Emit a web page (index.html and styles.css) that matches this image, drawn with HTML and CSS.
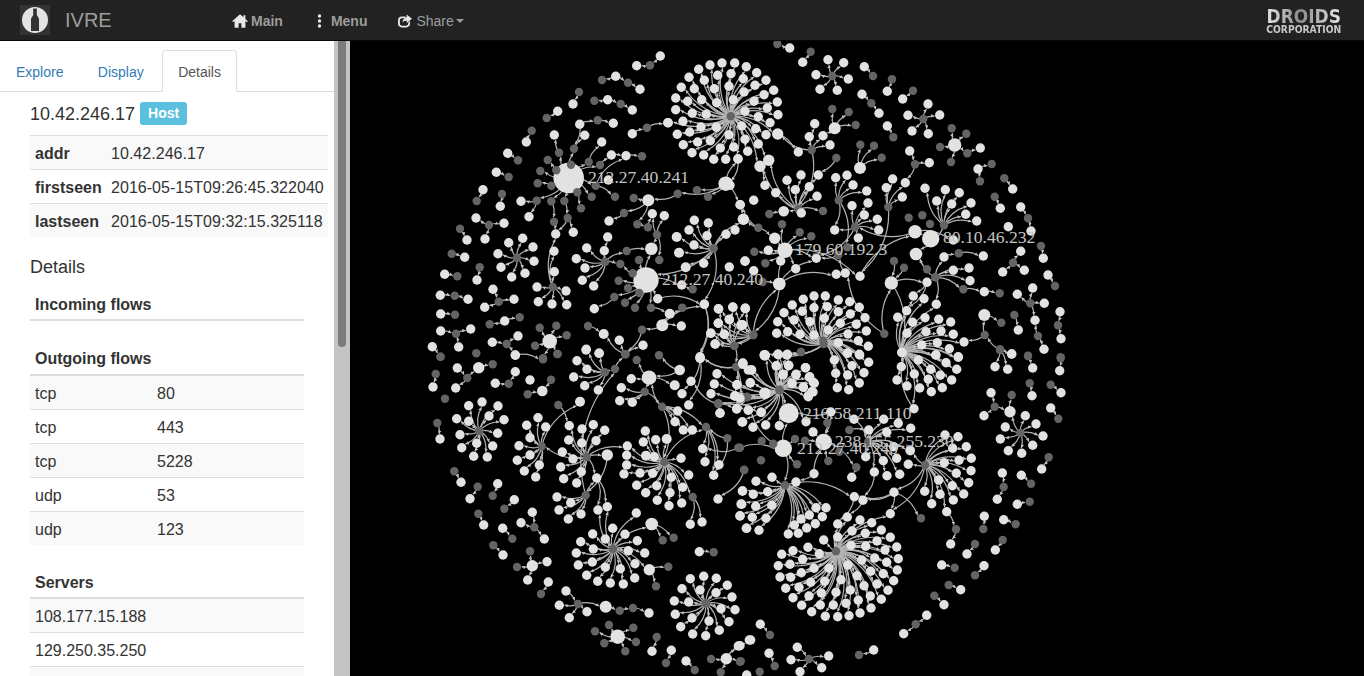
FILE: index.html
```html
<!DOCTYPE html>
<html lang="en">
<head>
<meta charset="utf-8">
<title>IVRE</title>
<link rel="stylesheet" href="styles.css">
</head>
<body>
<nav class="navbar">
  <a class="brand-logo">
    <svg class="brand-icon" viewBox="0 0 30 30">
      <circle cx="15" cy="15" r="13" fill="#e4e4e4"/>
      <path d="M13.200 3.500h3.600v6c0 2 2.200 2.400 2.200 5v11.500h-8V14.500c0-2.600 2.200-3 2.200-5z" fill="#333"/>
    </svg>
  </a>
  <a class="brand-name">IVRE</a>
  <ul class="nav">
    <li class="nav-main">
      <svg class="ico ico-home" viewBox="0 0 16 14"><path d="M8 0.3 0.2 7.2l.9 1L2.6 7v6.8h4V9.3h2.8v4.5h4V7l1.5 1.2.9-1-2.400-2.200V1.200h-2v2L8 .3z" fill="#e8e8e8"/></svg>
      <b>Main</b>
    </li>
    <li class="nav-menu">
      <svg class="ico ico-dots" viewBox="0 0 5 14"><circle cx="2.500" cy="2" r="1.700" fill="#e8e8e8"/><circle cx="2.500" cy="7" r="1.700" fill="#e8e8e8"/><circle cx="2.500" cy="12" r="1.700" fill="#e8e8e8"/></svg>
      <b>Menu</b>
    </li>
    <li class="nav-share">
      <svg class="ico ico-share" viewBox="0 0 15 14"><path d="M4 2.200h4v1.800H4.200C3 4 2 5 2 6.200v3.600C2 11 3 12 4.200 12h4.600C10 12 11 11 11 9.800V8.600l1.900-1.500v2.900c0 2.200-1.800 3.900-3.900 3.900H4C1.800 13.900 0 12.200 0 10V6.100C0 3.900 1.800 2.200 4 2.200z" fill="#e8e8e8"/><path d="M9.300 0 15 4.600 9.300 9.200V6.400C7.400 6.400 5.800 7.200 4.800 9 4.900 5.800 6.800 3.500 9.300 3.100z" fill="#e8e8e8"/></svg>
      <span>Share</span><i class="caret"></i>
    </li>
  </ul>
  <div class="droids"><span class="droids-top">DROIDS</span><span class="droids-sub">CORPORATION</span></div>
</nav>
<div class="main">
  <aside class="sidebar">
    <ul class="tabs">
      <li class="tab">Explore</li>
      <li class="tab">Display</li>
      <li class="tab tab-active">Details</li>
    </ul>
    <div class="panel">
      <h4 class="host-title">10.42.246.17 <span class="label">Host</span></h4>
      <table class="tbl tbl-wide">
        <tr><th class="kcol">addr</th><td>10.42.246.17</td></tr>
        <tr><th class="kcol">firstseen</th><td>2016-05-15T09:26:45.322040</td></tr>
        <tr><th class="kcol">lastseen</th><td>2016-05-15T09:32:15.325118</td></tr>
      </table>
      <h4 class="section">Details</h4>
      <table class="tbl tbl-flow">
        <thead><tr><th colspan="2">Incoming flows</th></tr></thead>
      </table>
      <table class="tbl tbl-flow">
        <thead><tr><th colspan="2">Outgoing flows</th></tr></thead>
        <tbody>
          <tr><td class="proto">tcp</td><td>80</td></tr>
          <tr><td class="proto">tcp</td><td>443</td></tr>
          <tr><td class="proto">tcp</td><td>5228</td></tr>
          <tr><td class="proto">udp</td><td>53</td></tr>
          <tr><td class="proto">udp</td><td>123</td></tr>
        </tbody>
      </table>
      <table class="tbl tbl-flow">
        <thead><tr><th>Servers</th></tr></thead>
        <tbody>
          <tr><td>108.177.15.188</td></tr>
          <tr><td>129.250.35.250</td></tr>
          <tr><td>&nbsp;</td></tr>
        </tbody>
      </table>
    </div>
  </aside>
  <div class="scrollbar"><div class="thumb"></div></div>
  <div class="canvas"><svg id="graph" class="graph" viewBox="350 41 1014 635" preserveAspectRatio="xMinYMin slice"></svg></div>
</div>
<script src="graph.js"></script>
</body>
</html>
```

FILE: styles.css
```css
* { box-sizing: border-box; }
html, body { margin: 0; height: 100%; overflow: hidden; }
body { font-family: "Liberation Sans", Arial, sans-serif; font-size: 14px; color: #333; background: #fff; }

.navbar { height: 41px; background: #222; border-bottom: 1px solid #080808; display: flex; align-items: center; padding-left: 20px; padding-right: 23px; }
.brand-logo { width: 30px; height: 30px; background: #333; flex: none; }
.brand-icon { width: 30px; height: 30px; display: block; }
.brand-name { margin-left: 15px; font-size: 20px; color: #9d9d9d; width: 167px; }
.nav { list-style: none; display: flex; margin: 0; padding: 1px 0 0; color: #9d9d9d; flex: 1; }
.nav li { display: flex; align-items: center; }
.nav b { font-weight: bold; }
.ico { display: block; }
.ico-home { width: 16px; height: 14px; margin-right: 3px; }
.ico-dots { width: 5px; height: 14px; margin-right: 9px; }
.ico-share { width: 14px; height: 14px; margin-right: 4px; }
.nav-menu { margin-left: 34px; }
.nav-share { margin-left: 31px; }
.caret { width: 0; height: 0; margin-left: 2px; border-top: 4px solid #9d9d9d; border-left: 4px solid transparent; border-right: 4px solid transparent; }
.droids { display: flex; flex-direction: column; align-items: center; width: 75px; height: 26px; margin-top: 2px; font-family: "DejaVu Sans", sans-serif; font-weight: bold; line-height: 1; white-space: nowrap; }
.droids-top { display: block; font-size: 20px; height: 17px; line-height: 17px; transform: scaleX(0.85); background: linear-gradient(90deg, #e6e6e6, #8a8a8a 45%, #e6e6e6); -webkit-background-clip: text; background-clip: text; color: transparent; }
.droids-sub { display: block; font-size: 10px; height: 9px; line-height: 9px; transform: scaleX(0.92); color: #c8c8c8; }

.main { display: flex; height: 635px; }
.sidebar { width: 334px; flex: none; overflow: hidden; padding-top: 9px; }
.scrollbar { width: 16px; flex: none; background: #c2c3c3; padding: 0 4px; }
.thumb { width: 8px; height: 306px; background: #7b7d7d; border-radius: 0 0 4px 4px; }
.canvas { flex: 1; background: #000; overflow: hidden; }
.graph { display: block; width: 1014px; height: 635px; }
.link { fill: none; stroke: #b2b2b2; stroke-width: 1.2; }
.arrow-head { fill: #c0c0c0; }
.node-white { fill: #e2e2e2; }
.node-grey { fill: #646464; }
.glabel { font-family: "Liberation Serif", serif; font-size: 17.6px; fill: #c4c4c4; }

.tabs { list-style: none; margin: 0; padding: 0; display: flex; border-bottom: 1px solid #ddd; height: 42px; }
.tab { margin-right: 2.4px; height: 42px; padding: 11px 15px 9px; border: 1px solid transparent; border-radius: 4px 4px 0 0; color: #337ab7; line-height: 20px; }
.tab-active { color: #555; background: #fff; border-color: #ddd; border-bottom-color: #fff; }

.panel { padding-left: 30px; }
h4 { font-weight: 500; font-size: 18px; line-height: 20px; margin: 0; }
.host-title { margin-top: 10px; margin-bottom: 10px; display: flex; align-items: center; height: 23px; white-space: pre; }
.label { display: inline-block; background: #5bc0de; color: #fff; font-size: 14px; font-weight: bold; line-height: 23px; height: 23px; padding: 0 8px; border-radius: 3px; }
.section { margin-top: 19px; margin-bottom: 10px; }

.tbl { border-collapse: collapse; font-size: 16px; line-height: 22.857px; margin-bottom: 20px; }
.tbl-wide { width: 298px; table-layout: fixed; }
.tbl-wide td { letter-spacing: 0.04px; }
.tbl-flow { width: 274px; }
.tbl th, .tbl td { padding: 7px 5px 3px; text-align: left; white-space: nowrap; }
.tbl td { border-top: 1px solid #ddd; }
.tbl th { font-weight: bold; }
.tbl-wide th { border-top: 1px solid #ddd; }
.tbl thead th { border-bottom: 2px solid #ddd; }
.tbl thead + tbody tr:first-child td { border-top: 0; }
.tbl-wide tr:nth-child(odd), .tbl tbody tr:nth-child(odd) { background: #f9f9f9; }
.kcol { width: 76px; }
.proto { width: 122px; }
```

FILE: graph.js
```js
var NS = "http://www.w3.org/2000/svg";
var svg = document.getElementById("graph");

var defs = document.createElementNS(NS, "defs");
var marker = document.createElementNS(NS, "marker");
marker.setAttribute("id", "arrow");
marker.setAttribute("viewBox", "0 0 6 6");
marker.setAttribute("refX", "6");
marker.setAttribute("refY", "3");
marker.setAttribute("markerUnits", "userSpaceOnUse");
marker.setAttribute("markerWidth", "3.5");
marker.setAttribute("markerHeight", "3.5");
marker.setAttribute("orient", "auto");
var head = document.createElementNS(NS, "path");
head.setAttribute("d", "M0 0L6 3L0 6z");
head.setAttribute("class", "arrow-head");
marker.appendChild(head);
defs.appendChild(marker);
svg.appendChild(defs);

var edgesLayer = document.createElementNS(NS, "g");
var nodesLayer = document.createElementNS(NS, "g");
var labelLayer = document.createElementNS(NS, "g");
svg.appendChild(edgesLayer);
svg.appendChild(nodesLayer);
svg.appendChild(labelLayer);

var seen = {};
function parse(tok, ox, oy) {
  var m = tok.split(",");
  var grey = m[0].charAt(0) === "g";
  var x = ox + parseFloat(m[0].slice(1)) / 3;
  var y = oy + parseFloat(m[1]) / 3;
  var r = m[2] ? parseFloat(m[2]) / 3 : (grey ? 4.2 : 4.7);
  var key = ox + ":" + oy + ":" + tok;
  if (!seen[key]) {
    seen[key] = 1;
    var c = document.createElementNS(NS, "circle");
    c.setAttribute("cx", x.toFixed(1));
    c.setAttribute("cy", y.toFixed(1));
    c.setAttribute("r", r.toFixed(1));
    c.setAttribute("class", grey ? "node-grey" : "node-white");
    nodesLayer.appendChild(c);
  }
  return { x: x, y: y, r: r };
}
function edge(a, b) {
  var dx = b.x - a.x, dy = b.y - a.y, d = Math.sqrt(dx * dx + dy * dy);
  if (d < 1) return;
  var k = (d - b.r - 0.5) / d;
  if (k < 0.1) return;
  var ex = a.x + dx * k, ey = a.y + dy * k;
  var p = document.createElementNS(NS, "path");
  var rad = (d * 1.0).toFixed(1);
  p.setAttribute("d", "M" + a.x.toFixed(1) + " " + a.y.toFixed(1) + "A" + rad + " " + rad + " 0 0 1 " + ex.toFixed(1) + " " + ey.toFixed(1));
  p.setAttribute("class", "link");
  p.setAttribute("marker-end", "url(#arrow)");
  edgesLayer.appendChild(p);
}
function add(ox, oy, data) {
  data.split(";").forEach(function (g) {
    g = g.trim();
    if (!g) return;
    if (g.indexOf(">") >= 0) {
      var chain = g.split(">").map(function (t) { return parse(t.trim(), ox, oy); });
      for (var i = 0; i + 1 < chain.length; i++) edge(chain[i], chain[i + 1]);
    } else {
      var toks = g.split(/\s+/).map(function (t) { return parse(t, ox, oy); });
      for (var j = 1; j < toks.length; j++) edge(toks[0], toks[j]);
    }
  });
}

add(420, 40, "w721,48>g690,76>w650,77;w587,109 g546,120 g624,128;g624,128>w660,148;g477,156>w459,192;w563,179 g523,182 g602,192;g602,192>w637,210;w413,214>g380,234;w479,253 g533,241 g462,326;g533,241>w580,250;w319,306>g335,272;w263,340>g294,361;w229,397>g266,411;" +
"w446,414,46 g383,360 g361,393 g409,391 g453,374 g353,430 g394,437 g350,482 g394,484 g433,483 g472,457 g515,470 g527,437 g483,505 g417,338 g462,326 g506,366 g540,375;g417,338>w403,285;g462,326>w494,286;g506,366>w545,306;g540,375>w574,345;g527,437>w618,347;w618,347>g666,349;w574,345>w618,347;g527,437>g585,470;w565,420;" +
"g350,482 w303,484 w327,530;g394,484>g402,545>w407,582;g433,483>g443,534>w460,577;g443,534>w407,582;" +
"g398,741 w351,741 w438,753 w355,785 w396,792 w440,794 w403,695 w402,634 w407,582;" +
"w189,449>g170,483;g246,462>w241,499;g207,555 w168,534 w252,550 w195,597;g120,566>w141,600;g95,641>w134,652;w74,703>g112,709;g179,682>w171,720;" +
"g291,653 w266,608 w308,595 w339,621 w342,664 w315,700 w275,711 w243,682 w234,641;" +
"w219,748>g236,785;g236,785 w282,778 w194,802;w61,766>g104,767>w144,778;w62,822>g105,824;w62,873>g108,881;g108,881 w152,867 w116,921;w37,920>g61,950;g169,940;w254,843 g209,853 g299,832;w217,907>g260,912;g260,912 w294,888 w286,945;w389,904,22 g359,863 g409,857 g440,886 g345,917 g412,942 g369,955;" +
"w637,281>g681,263>w743,248;w917,431,22>w954,356;" +
"w917,431,22 g773,461 g831,451 g864,470 w961,494;g773,461>w685,481,18;w685,481,18 g641,474 g612,519 g652,553;g612,519>w567,543;g652,553>g684,562;g684,562 w697,521;g711,584 w733,527 w697,521 w694,626,19 g718,660;" +
"g881,625 w823,541 w865,549 w807,570 w861,587 w770,591,15 w822,615 w777,638,15 w851,670 w797,682,15 w678,720,38 w853,793 w918,583 w945,570 w970,538,17;" +
"g556,665 w563,591 w500,624 w553,632 w469,656 w495,684 w487,721 w521,738 g620,633 g601,672;g620,633>w694,626,19;" +
"w678,720,38 g638,700 g596,722 g624,744 g583,771 g615,788 g658,759 g645,803 g693,803 w713,776 w785,735 g657,660 g601,672 w694,626,19;g583,771>w523,806;g693,803>w749,821,15;w713,776>w853,793;" +
"w727,856,18 w784,858 w749,821,15 g666,869 g787,803 w853,793;g666,869>g617,943;g617,943 w551,882,15 w669,916 w598,901;g504,858>w551,882,15;w499,928;w537,940;" +
"g943,917 w895,806 w938,801 w976,805 w928,838 w965,855,15 w895,850 w913,883 w872,880 w885,912;w853,793>w840,950;g818,748 w785,735;w975,663;w928,681;w961,494>w970,538,17;");

add(665, 52, "g197,193 w171,33 w209,33 w244,44 w275,62 w303,85 w326,115 w337,150 w339,188 w338,246,17 w135,39 w101,52 w72,76 w49,106 w32,138 w32,173 w10,212 w37,247 w55,278 w81,302 w116,309 w146,322 w182,322 w219,321 w248,298 w280,276 w311,325,17 w285,343,17 w315,212 w303,248 w158,70 w198,65 w235,80 w270,100 w297,128 w307,168 w118,85 w88,110 w68,148 w54,208 w74,240 w98,270 w136,266 w166,288 w206,285 w240,262 w272,230 w280,194 w267,148 w237,120 w192,103 w148,110 w110,143 w82,184 w108,225 w154,226 w192,248 w230,222 w240,178 w205,143 w155,152 w124,187;w219,321>w195,400;w285,343,17>w300,400;w338,246,17>w400,300;");

add(690, 270, "g190,195 w86,117 w129,112 w166,116 w118,149 w155,165,15 w85,160 w63,190 w103,193 w76,222 g133,227 w268,42,19;g133,227>g139,290;w43,103,14>w31,265,14;g139,290 w31,265,14 w184,300;w224,256,16;w264,253;w290,255;w259,287;w296,287;w279,315;w318,315;w347,293;w358,322;w373,340;w340,352;w306,340;w369,366;w354,378;g333,246;" +
"g268,360 w184,300 w158,279 w81,311 w73,342 w141,344 w181,339 w63,371 w134,378 g171,380 w225,369,16 w224,256,16 w264,253 w290,255 w259,287 w296,287 w279,315 w318,315 w306,340 w340,352 g85,402;g85,402 w140,416 w175,420 w213,427 w90,430 w3,334;");

add(740, 40, "w149,24>g112,12;g212,35>w188,67;g277,108 w264,59 w311,68 w228,104 w325,117 w240,148 w292,151;w373,80>g399,108;g456,118>w442,154;g519,152>w488,177;w366,163>g394,190>w417,220;g550,237 w564,192 w504,226 w599,225 w516,273 w565,281;w442,258>g460,292;w644,315,20 g635,265 g679,281 g600,321 g682,340 g633,366;g682,340>w721,324;w509,333>g525,373>w568,368;g525,373>w496,428;w714,387 g755,372 g720,424;g793,415>w818,447;g764,470>w781,505;w842,501>g864,535>w873,573;w805,560;g903,618>w910,655;g819,668 w842,634 w788,696 w853,691;w924,705>g945,738;g871,790 w878,744 w832,763 w913,790 w885,841;g894,888 w885,841 w912,928;g823,825>w835,870;w960,815>g954,856>w963,896;w815,942>g780,928>g734,885>w733,825,18;w733,825,18>g784,848;g864,947;g962,952;g734,885>w672,906;g587,712>g670,748>w733,755>g779,760;" +
"g215,330 w224,251 w208,290 w249,287 w270,315 w113,283 g175,508;w284,265,18 g277,207 g326,216 g347,255 w249,287;w360,384,18 g361,314 g402,317 g425,353;g289,354>w235,405;" +
"g175,508 w141,421 w183,405 w166,449 w208,440 w231,469 w107,458 w235,405 g249,513 w131,514,16 w184,519 w85,361 w60,379;" +
"g296,481 w287,413 w321,406 w339,435 w380,453 w284,570;g345,562 w336,497 w384,489 w373,525 w412,538 w416,570 w355,594 w284,570 w229,655;g445,501 w439,443 w458,417 w496,428 w487,471;g445,501>w360,709;g296,481>g322,622;" +
"g612,556 w555,445 w616,449 w658,458 w590,483 w635,492 w693,489 w677,523 w710,543;g506,533;g547,526;g570,552;w525,575,20 w572,596,26 w640,600;g612,556>w528,642,19;w525,575,20>g345,562;" +
"g586,712 w640,691 w687,684 w690,722 w561,727 w528,642,19 w612,651;g561,688 w528,642,19;w612,651>g656,640>w730,648;g462,663>w454,729,20;g492,683>w454,729,20;w454,729,20>w561,727;g587,712>w589,793;" +
"w118,731,18 w289,703 w229,655 w135,631,23;w316,699 w289,703;w360,709>w525,575,20;w135,631,23 g43,635 w85,631 g76,670 w122,663 w167,686 w229,655 g179,577 g214,589 g126,553 w104,595,17 w360,709;w15,664;w41,692;g68,726 w118,731,18;g55,563 w12,539 w0,494 w104,595,17;w41,481;g88,522 w131,514,16;w316,699>g295,645>w229,655;w355,594;g433,881 w316,699 w454,729,20;w118,731,18>g40,885;" +
"g251,912 w190,778 w222,768 w256,768 w295,780 w329,785 w358,802 w375,833 w379,873 w385,919 w157,795 w187,814 w222,803 w262,800 w295,815 w331,822 w349,853 w355,902 w132,818 w162,840 w210,845 w253,835 w301,850 w324,882 w113,845 w143,875 w180,883 w222,885 w265,870 w110,880 w295,908 w323,939 w358,943 w74,945,15 w114,943 w142,943;g183,936;" +
"w485,937 w473,832 w518,847 w555,833 w596,838 w632,846 w500,812 w558,875 w603,873 w640,883 w672,906 w501,880 w592,908 w628,926 w655,950 w545,915 w588,945 w520,768 w552,776 w589,793;w454,729,20>w485,937;w561,727>w500,812;w561,727>w520,768;g40,885 w16,805 w8,855;");

add(420, 350, "g62,20;w112,54>g142,84;g142,84 w176,53,17 w107,114;w176,53,17>g218,43;g75,146;g47,72>w39,111;w286,16>g369,28;g413,12;w286,65>g266,101>w226,100;w330,90;g393,89>w367,123,16;g323,133>w367,123,16;" +
"g178,243 w146,167 w186,156 w234,168 w252,209 w233,250 w218,288 w202,321 w161,319 w125,293 w120,254 w110,206 w146,214 w207,198 w170,280;g52,219>w60,267;g103,364>w123,397;g173,410>w150,446;w233,401>g218,437;w283,449>g253,476;g175,491>w191,525;w337,487>g343,532;g343,532 w303,518 w373,567;w248,535>g277,566;g220,586>w249,615;" +
"w337,647,17 g330,604 w381,635 g291,651 w323,690;w385,696>g363,732;w438,723>g474,762;g474,762 w418,766 w448,803 w501,785 w557,770,18;w557,770,18>g599,782>g639,774>w687,789;w593,860,22 g567,825 g640,833 g525,844 g648,876 g553,880 g616,904;g710,861>w696,904;w754,901>g738,939;w798,933>g824,960;w919,926,17 g873,927 g962,934 g902,967 w955,888 w988,870;" +
"g365,289 w320,226 w354,203 w377,231 w330,263 w297,287 w330,315 w292,331 w313,363 w347,381 w358,345 w480,155,15;g415,165>w448,227;" +
"g500,321 w448,227 w486,237 w520,224 w554,241 w446,270 w485,279 w528,272 w427,306 w459,327 w422,351 w431,386 w470,399 w484,365 w530,384 w562,315,17 w622,288 g365,289;w620,316;w620,345;w612,372;" +
"g733,336 w676,243 w740,267,15 w707,269 w670,276 w678,317,15 w703,320 w783,325 w660,369 w698,370 w650,406 w677,428 w710,407 w754,382 w806,375 w788,412 w750,428 w712,451 w785,459 w747,467 g818,441 w622,288 w620,316 w620,345 w612,372 g858,231;g818,441 w811,523 w846,516;" +
"g497,436 w411,441 w452,458 w417,480 w445,507 w483,492 w530,384 g585,57;w530,384 w534,480 w562,470;w562,315,17>g497,436;" +
"g579,597 w518,552 w578,535 w615,553 w652,572 w482,575 w520,597 w556,567 w469,609 w517,636 w475,645 w556,652 w625,602 w674,609 w645,641 w601,656 w500,676 w533,694 w571,699 w610,702 w644,684 w688,659,17 w649,489 w695,522,19 w534,480 w562,470;w688,659,17 g745,650 g708,709;w695,522,19 g728,571 g761,563;w838,605>g881,607;" +
"g858,760 w811,686 w851,679 w889,685 w922,706 w936,741 w945,779 w927,815 w898,841 w857,857 w818,852 w782,830 w766,793 w763,753 w786,716 w840,720 w888,728 w806,756 w903,776 w867,813 w816,804;" +
"g415,165;g555,67 w471,32 w501,58 w461,81 w494,107 w535,120 w538,10 w498,0 g585,57;g585,57>g615,13;g650,30;g717,16;w779,60,16 w687,83,22 g717,16;w687,83,22 w764,106,15 w634,86 g674,125 g650,30;g674,125 w604,113 w599,152 w637,157 g726,170;" +
"g726,170 w687,83,22 w773,183 w765,215 w790,240 w817,240 g858,231 g733,336;g858,231 w848,296 w855,335 w897,344 w881,376;g922,265 g858,231 w881,376;g955,293 w848,296;g973,360>w894,447;w840,25 w786,131 w806,165;w900,189>g895,160;g949,51 w840,25 w968,42 w985,60 w951,104 w945,138 w950,177;g981,142 w951,104 w945,138 w950,177;w966,216;w967,423;w963,462;w960,497;w979,535;");

add(740, 350, "w75,17;w115,14;w142,14;g119,120 w9,40 w35,60 w109,48 w146,46 w196,53 w129,73 w168,73 w209,80 w31,98 w156,101 w190,111 w220,97 w215,125 w205,140 w75,130,17 g20,141 w25,181 w64,187 w0,145 w146,190,30 w198,215 w8,216 w39,232 w77,225 w118,227;w75,17>g119,120;w115,14>g119,120;w142,14>g119,120;" +
"w272,186 w146,190,30 w251,276,25;w522,176 w486,8;g262,218 w251,276,25;g328,240 w386,240;w219,246 w251,276,25;g165,267 w130,295,26;g195,272 w251,276,25;g100,281 w130,295,26;g65,273;g0,293 w130,295,26;g63,331;g171,343 w130,295,26;g12,359;g265,333 w251,276,25;g298,305;g349,352>w335,382;w251,276,25>g349,352;w130,295,26 w146,190,30 w25,181;w222,371 w168,396;w130,295,26>g135,406;w222,371>w251,276,25;" +
"g385,275 w386,240 w431,208 w475,220 w512,235 w440,247 w461,290 w510,300 w470,325 w430,332 w377,320 w441,377 w479,373 w403,366;w342,208>g385,275;w403,366>w369,451;" +
"g555,345 w615,255 w654,260 w679,290 w694,325 w693,362 w686,398 w671,432 w640,450 w600,433 w575,461 w554,424 w638,295 w657,331 w649,370 w637,407 w596,390 w613,338 w505,343 w511,302 w462,427 w620,485;w462,427 w369,451 w343,440 w451,491;g555,345>w451,491;w462,427>g543,505;" +
"g135,406 w48,394 w96,382 w83,425 w40,433 w8,423 w95,466 w47,469 w5,463 w78,505 w37,502 w0,498 w57,541 w20,535 w258,473 w228,473 w247,500 w208,495 w183,507 w226,521 w200,534 w163,525 w175,550 w145,552 w343,440;w343,440>w293,522;w369,451>w322,501;" +
"g288,604 w322,501 w293,522 w360,510 w395,518 w424,540 w451,562 w470,591 w475,626 w472,660 w461,692 w444,721 w424,748 w393,774 w360,789 w327,797 w293,800 w256,799 w215,785 w185,766 w159,743 w137,715 w120,681 w115,647 w125,613 w336,543 w376,550 w411,573 w435,600 w440,637 w430,671 w411,702 w391,738 w355,751 w318,760 w280,765 w241,765 w207,738 w177,712 w152,682 w150,643 w159,602 w293,561 w333,586 w377,589 w404,624 w392,664 w372,707 w331,720 w288,727 w244,729 w212,697 w184,668 w188,628 w204,592 w251,570 w365,630 w351,677 w303,689 w254,694 w222,655 w238,611 w324,645 w267,655 w451,491;" +
"w486,8 w535,30 w587,15 w618,38 w655,22 w484,50 w523,72 w572,58 w650,58 w601,76 w471,90 w501,108 w539,114 w565,88 w574,125 w607,113 w635,90 w522,176;" +
"g250,-28 w283,30 w322,10 w359,15 w386,37 w287,70 w336,47 w372,68 w323,75 w292,113 w358,99 w326,119;" +
"w620,485>g648,538>w632,582;w733,499>g730,537;w791,509>g827,523;g788,570>w766,600;g705,582>w681,612;w605,645>g644,653;w732,647>g705,676;g626,705>w662,719;g583,737>w612,764;w560,796>g527,823>w491,851;w61,823>g90,855;w32,870;w0,887;w172,892>g207,927;g207,927 w153,929 w266,918 w245,953 w180,965;w87,910>g104,948;g0,935;g59,965;w20,975;w401,900>g357,915;" +
"g780,0 w765,50 w803,58 w815,12;g864,18>w878,54;g962,25>w959,62;g869,100>w876,137;g932,104>w963,128;w753,128>g764,170>w732,197;g764,170>w810,185,17;w810,185,17>g815,135;g841,249 w856,197 w888,222 w796,231 w781,267 w909,258 w878,286 w805,302 w845,310 w810,185,17;w932,174>g955,206;g926,322>w905,357;w787,369>g791,411>w772,448;w844,376>g873,401;w832,463>g869,455;");

[["212.27.40.241", 588, 183], ["212.27.40.240", 662, 285], ["179.60.192.3", 795, 255], ["80.10.46.232", 943, 243], ["216.58.211.110", 803, 419], ["212.27.40.240", 797, 454], ["238.155.255.230", 835, 447]].forEach(function (l) {
  var t = document.createElementNS(NS, "text");
  t.setAttribute("x", l[1]);
  t.setAttribute("y", l[2]);
  t.setAttribute("class", "glabel");
  t.textContent = l[0];
  labelLayer.appendChild(t);
});
```
